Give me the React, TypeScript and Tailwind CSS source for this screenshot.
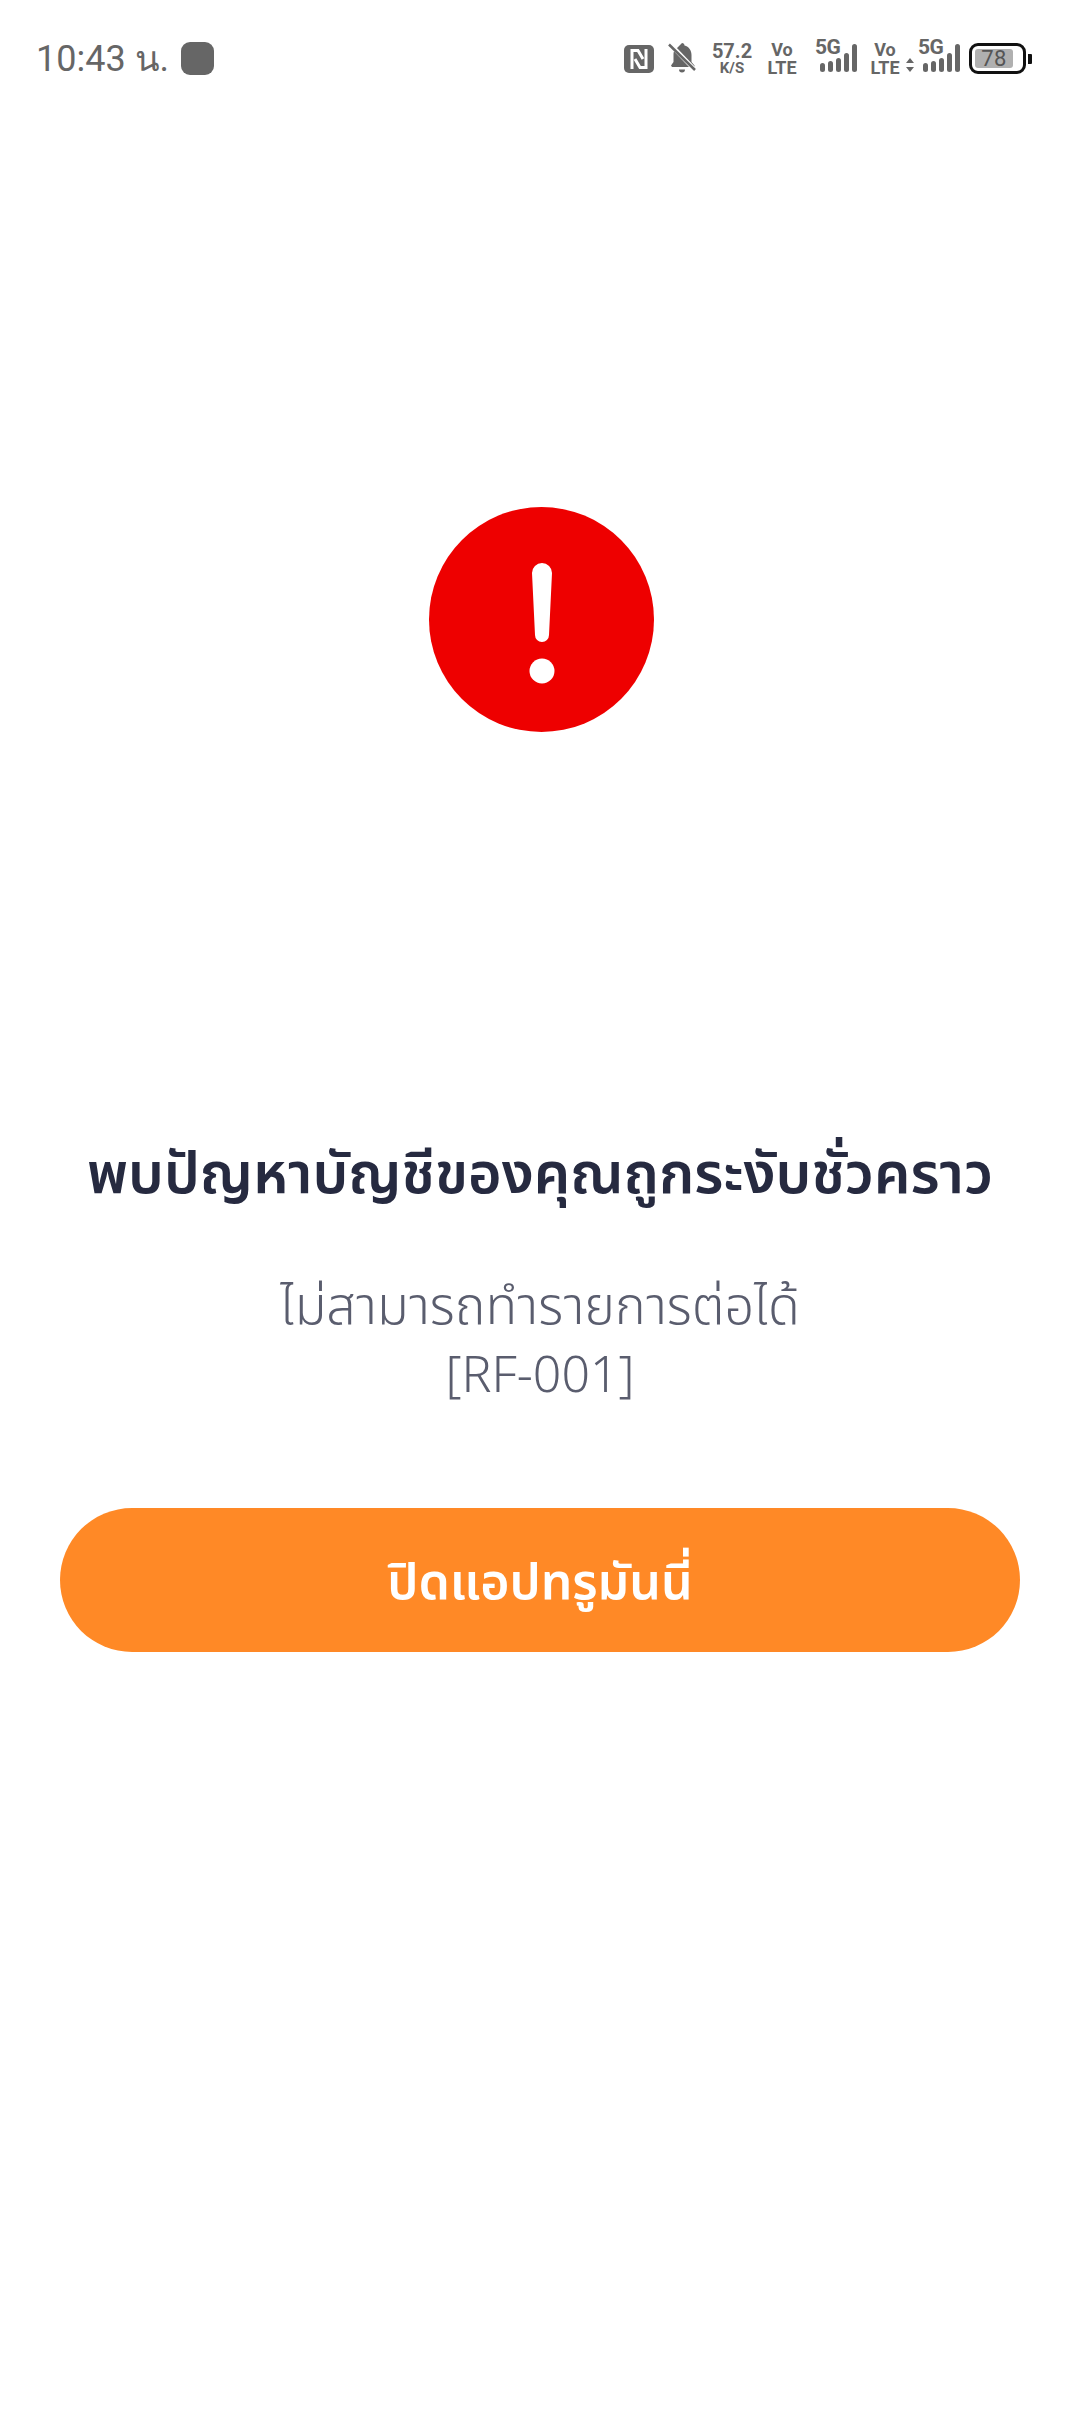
import React from 'react';

const GREY = '#666666';

const SignalBars = ({ arrows }: { arrows?: boolean }) => (
  <div className="relative w-[43px] h-[31px]">
    <span className="absolute top-[-6px] left-0 font-['Roboto',sans-serif] font-bold text-[21px] leading-[20px] tracking-[-0.5px] text-[#666666]">5G</span>
    <svg width="43" height="31" viewBox="0 0 43 31" className="absolute inset-0" fill={GREY}>
      <rect x="5" y="20" width="5" height="9" rx="2.5" />
      <rect x="13" y="18" width="5" height="11" rx="2.5" />
      <rect x="21" y="15" width="5" height="14" rx="2.5" />
      <rect x="29" y="10" width="5" height="19" rx="2.5" />
      <rect x="37" y="1" width="5" height="28" rx="2.5" />
    </svg>
    {arrows && (
      <svg width="8" height="14" viewBox="0 0 8 14" className="absolute left-[-12px] top-[15px]" fill={GREY}>
        <path d="M4 0 8 5H0zM4 14 0 9h8z" />
      </svg>
    )}
  </div>
);

const VoLte = () => (
  <div className="w-[30px] flex flex-col items-center font-['Roboto',sans-serif] font-bold text-[#666666] text-[18px] leading-[18px]">
    <span>Vo</span>
    <span>LTE</span>
  </div>
);

const StatusBar = () => (
  <div className="flex items-center justify-between h-[117px] pl-[36px] pr-[48px]">
    <div className="flex items-center gap-[12px]">
      <span className="font-['Roboto',sans-serif] text-[36px] leading-none text-[#666666]">10:43 น.</span>
      <div className="w-[33px] h-[33px] rounded-[9px] bg-[#666666]"></div>
    </div>
    <div className="flex items-center">
      <svg width="30" height="28" viewBox="0 0 30 28" className="mr-[14px]">
        <rect width="30" height="28" rx="5" fill={GREY} />
        <path d="M8 24V5.500h6L19 14M22 4v18.500h-6L11 14" fill="none" stroke="#fff" strokeWidth="3" />
      </svg>
      <svg width="28" height="31" viewBox="0 0 28 31" className="mr-[15px]" fill={GREY}>
        <path d="M14 0c1.500 0 2.500 1 2.500 2.500 4.500 1 7 5 7 9.500v7l3 3.500v1.500H4l-1-1.500 2.500-3.500V11c0-1 .2-2 .6-3zM11 26.500h6a3 3 0 0 1-6 0z" />
        <path d="M2 1 26 26" stroke="#fff" strokeWidth="4.500" />
        <path d="M1 1.500 27 27" stroke={GREY} strokeWidth="2.500" />
      </svg>
      <div className="w-[42px] mr-[14px] flex flex-col items-center font-['Roboto',sans-serif] font-bold text-[#666666]">
        <span className="text-[20px] leading-[20px]">57.2</span>
        <span className="text-[15px] leading-[15px]">K/S</span>
      </div>
      <div className="mr-[18px]"><VoLte /></div>
      <div className="mr-[12px]"><SignalBars /></div>
      <div className="mr-[8px]"><VoLte /></div>
      <div className="ml-[10px] mr-[8px]"><SignalBars arrows /></div>
      <div className="flex items-center">
        <div className="w-[57px] h-[31px] rounded-[9px] border-[3px] border-[#111111] p-[3px] flex">
          <div className="w-[38px] h-full rounded-[3px] bg-[#b0b0b0] flex items-center justify-center font-['Roboto',sans-serif] text-[22px] leading-none text-[#555555] tracking-[0.5px]">78</div>
        </div>
        <div className="w-[4px] h-[10px] ml-[2px] bg-[#111111] rounded-r-[1px]"></div>
      </div>
    </div>
  </div>
);

export default function App() {
  return (
    <div className="w-[1080px] min-h-[2436px] bg-white font-['Noto_Sans','Noto_Sans_Thai','DejaVu_Sans',sans-serif]">
      <StatusBar />
      <div className="flex flex-col items-center">
        <svg width="225" height="225" viewBox="0 0 225 225" className="mt-[390px] ml-[3px]">
          <circle cx="112.500" cy="112.500" r="112.500" fill="#ee0000" />
          <path d="M103 66a10 10 0 0 1 20 0l-3 62a7 7 0 0 1-14 0z" fill="#fff" />
          <circle cx="113" cy="164" r="12.500" fill="#fff" />
        </svg>
        <h1 className="mt-[404px] text-[57.5px] leading-[70px] font-semibold text-[#262a40] text-center whitespace-nowrap">พบปัญหาบัญชีของคุณถูกระงับชั่วคราว</h1>
        <p className="mt-[64px] text-[52px] leading-[68px] font-light text-[#5a5d6e] text-center">
          ไม่สามารถทำรายการต่อได้
          <br />
          <span className="text-[50px]">[RF-001]</span>
        </p>
        <button className="mt-[101px] w-[960px] h-[144px] rounded-full bg-[#ff8926] text-white text-[50px] font-semibold">ปิดแอปทรูมันนี่</button>
      </div>
    </div>
  );
}
